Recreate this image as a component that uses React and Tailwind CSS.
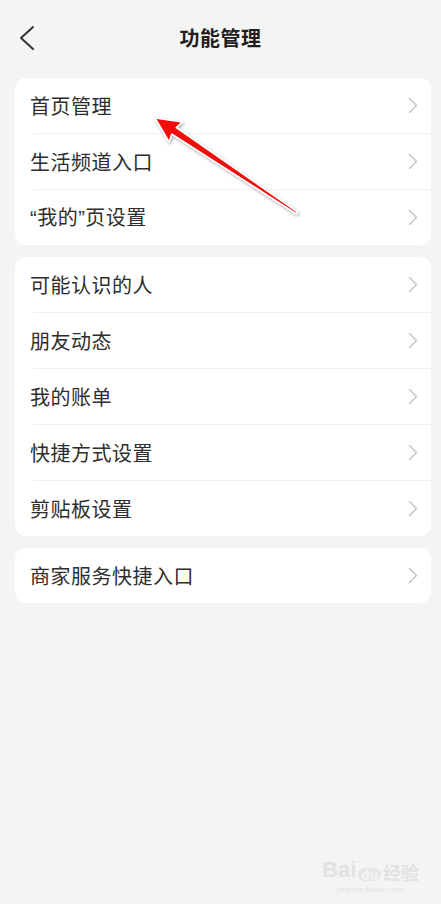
const groups = [
  ["首页管理", "生活频道入口", "“我的”页设置"],
  ["可能认识的人", "朋友动态", "我的账单", "快捷方式设置", "剪贴板设置"],
  ["商家服务快捷入口"],
];

// narrow latin quotes like the original
function Label({ text }) {
  return text.split(/([“”])/).map((part, i) =>
    part === "“" || part === "”" ? (
      <span key={i} style={{ fontFamily: '"Liberation Sans", sans-serif' }}>
        {part}
      </span>
    ) : (
      <span key={i}>{part}</span>
    )
  );
}

function Row({ label }) {
  return (
    <div className="flex h-[55px] items-center justify-between pl-[15px] pr-[13px]">
      <span className="text-[20px] leading-none tracking-[0.5px] text-[#2e2e2e]">
        <Label text={label} />
      </span>
      <svg width="10" height="17" viewBox="0 0 10 17" fill="none">
        <polyline points="1.5,1.5 8.5,8.5 1.5,15.5" stroke="#c6c6c6" strokeWidth="1.5" strokeLinecap="round" strokeLinejoin="round" />
      </svg>
    </div>
  );
}

export default function App() {
  return (
    <div
      className="relative min-h-[904px] w-full overflow-hidden bg-[#f4f4f4]"
      style={{ fontFamily: '"Noto Sans CJK SC", "Noto Sans", sans-serif' }}
    >
      <header className="relative flex h-[78px] items-center justify-center pb-[3px]">
        <svg className="absolute left-[18px] top-[25px]" width="18" height="26" viewBox="0 0 18 26" fill="none">
          <polyline points="15,2 3,13 15,24" stroke="#333" strokeWidth="2" strokeLinecap="round" strokeLinejoin="round" />
        </svg>
        <h1 className="text-[20px] font-bold tracking-[0.5px] text-[#1f1f1f]">功能管理</h1>
      </header>

      <div className="flex flex-col gap-[12px] pl-[15px] pr-[10px]">
        {groups.map((items, gi) => (
          <div key={gi} className="overflow-hidden rounded-[11px] bg-white">
            {items.map((label, i) => (
              <div key={label}>
                {i > 0 && <div className="ml-[18px] h-px bg-[#efefef]" />}
                <Row label={label} />
              </div>
            ))}
          </div>
        ))}
      </div>

      {/* red annotation arrow */}
      <svg className="pointer-events-none absolute left-0 top-0" width="441" height="300" viewBox="0 0 441 300">
        <defs>
          <filter id="sh" x="-20%" y="-20%" width="140%" height="140%">
            <feDropShadow dx="1" dy="1.5" stdDeviation="1.5" floodColor="#000" floodOpacity="0.35" />
          </filter>
        </defs>
        <polygon
          points="155,118 182.5,121.9 176.3,127.5 297.6,212.2 296.4,213.8 171.9,134.1 169.1,141.9"
          fill="#f20a0a"
          stroke="#ffffff"
          strokeWidth="1.6"
          strokeLinejoin="round"
          filter="url(#sh)"
        />
      </svg>

      {/* watermark */}
      <div className="pointer-events-none absolute bottom-[10px] right-[22px] flex flex-col items-center text-[#e2e2e2]">
        <div className="flex items-end gap-[2px] leading-none">
          <span className="text-[22px] font-bold" style={{ fontFamily: '"Liberation Sans", sans-serif' }}>Bai</span>
          <span className="rounded-full bg-[#e6e6e6] px-[3px] text-[13px] font-bold text-[#f4f4f4]">du</span>
          <span className="text-[18px] font-bold">经验</span>
        </div>
        <span className="mt-[4px] text-[9px] leading-none" style={{ fontFamily: '"Liberation Serif", serif' }}>
          jingyan.baidu.com
        </span>
      </div>
    </div>
  );
}
